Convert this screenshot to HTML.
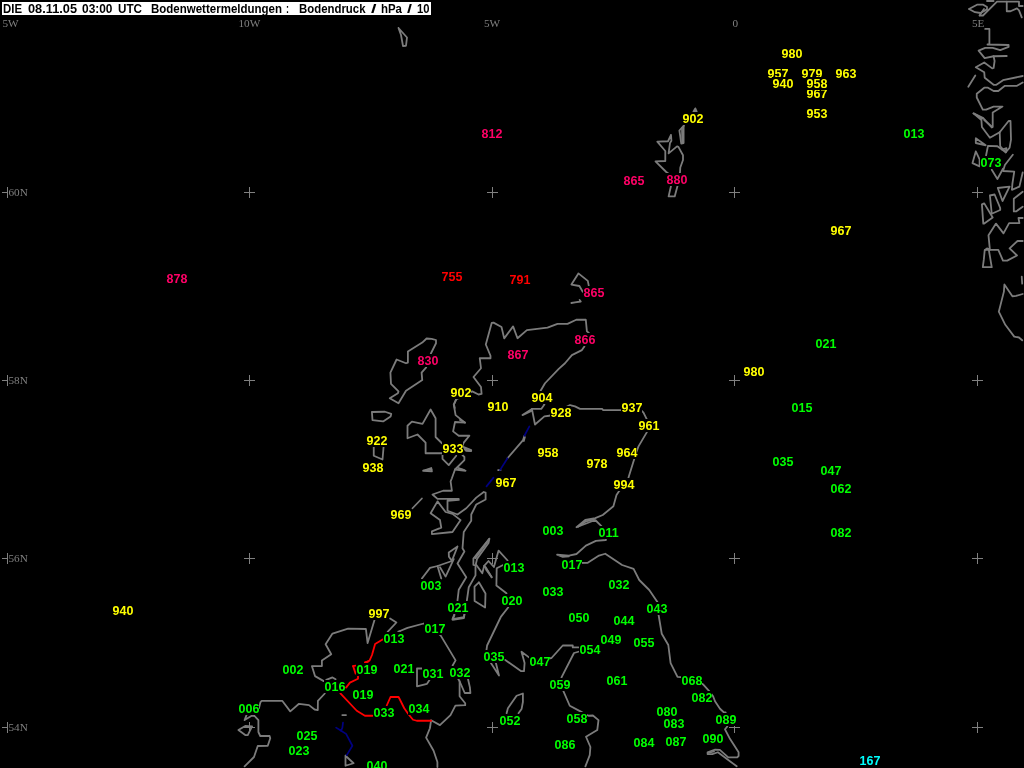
<!DOCTYPE html>
<html lang="de"><head><meta charset="utf-8"><title>Bodenwettermeldungen</title>
<style>
html,body{margin:0;padding:0;background:#000;width:1024px;height:768px;overflow:hidden}
svg{display:block;position:absolute;left:0;top:0;will-change:transform}
.l{font-family:"Liberation Sans",Arial,sans-serif;font-weight:bold;font-size:12.5px}
.t{font-family:"Liberation Sans",Arial,sans-serif;font-weight:bold;font-size:12.5px;fill:#000}
.g{font-family:"Liberation Serif","Times New Roman",serif;font-size:11.2px;fill:#808080}
.c{stroke:#808080;stroke-width:1;fill:none;shape-rendering:crispEdges}
.k{stroke:#7c7c7c;stroke-width:1.8;fill:none;stroke-linejoin:round;stroke-linecap:round}
.r{stroke:#ff0000;stroke-width:1.8;fill:none;stroke-linejoin:round;stroke-linecap:round}
.b{stroke:#000080;stroke-width:1.7;fill:none;stroke-linejoin:round;stroke-linecap:round}
</style></head><body>
<svg width="1024" height="768" viewBox="0 0 1024 768">
<rect x="0" y="0" width="1024" height="768" fill="#000"/>
<path class="c" d="M2 192.5 H13 M7.5 187 V198 M244 192.5 H255 M249.5 187 V198 M487 192.5 H498 M492.5 187 V198 M729 192.5 H740 M734.5 187 V198 M972 192.5 H983 M977.5 187 V198 M2 380.5 H13 M7.5 375 V386 M244 380.5 H255 M249.5 375 V386 M487 380.5 H498 M492.5 375 V386 M729 380.5 H740 M734.5 375 V386 M972 380.5 H983 M977.5 375 V386 M2 558.5 H13 M7.5 553 V564 M244 558.5 H255 M249.5 553 V564 M487 558.5 H498 M492.5 553 V564 M729 558.5 H740 M734.5 553 V564 M972 558.5 H983 M977.5 553 V564 M2 727.5 H13 M7.5 722 V733 M244 727.5 H255 M249.5 722 V733 M487 727.5 H498 M492.5 722 V733 M729 727.5 H740 M734.5 722 V733 M972 727.5 H983 M977.5 722 V733"/>
<g>
<polyline class="k" points="398.5,28 407,37.5 406,45.75 403,46 401,35 398.5,28"/>
<polyline class="k" points="969,9 977,4.7 983.3,4.7 987,7 987,9.4 980.5,13 975,12.2 969,9"/>
<polyline class="k" points="987,1 993.6,1"/>
<polyline class="k" points="980,15.5 983,15.5 997,1.7 1019,1.7 1019,6 1022.7,6"/>
<polyline class="k" points="984,9 979.5,15.5"/>
<polyline class="k" points="1006.75,1.7 1006.75,11.25 1010.5,11.25 1017,8.4 1019,10.3 1021.75,17.3"/>
<polyline class="k" points="985.2,28.9 989.4,28.9 989.4,44.5 987.5,44.5 1008.6,45 1008.6,46.9 1000.2,50.2 992.7,47.8 985.2,47.8 978.6,50.6 984.7,58.1 993.6,56.25 1006.75,56"/>
<polyline class="k" points="993.6,56.25 994.6,61 993.6,68 992.2,68.4 984.25,62.5 975.8,67.3 984.25,72.2 984.7,77.8 993.6,84.8 996.4,84.8 1003,80.2 1022.7,76"/>
<polyline class="k" points="975.3,75.5 968.3,86.7"/>
<polyline class="k" points="1022.7,82.5 1017,85.8 1004.9,85.8 998.3,91 993.6,91 988,87.7 984.25,87.7 976.75,93.75 976.75,97.5 982.8,109.7 986.1,109.7 993.6,106.6 1002.5,106.6 992.7,112.5 992.7,127 991.75,127.5 982.8,117.7 973.5,113.4 981.4,120 981.9,127 989.9,137.8 999.7,132.2 1008.6,121 1010.5,121 1011,139.7 1009.6,147.7 1005.8,152.3 997.4,146.25 988,145.8 986.1,155.2 985,160"/>
<polyline class="k" points="973.5,113.4 982.5,118.6"/>
<polyline class="k" points="999.7,132.2 1000.2,146.25 1005.8,152.3"/>
<polyline class="k" points="1002,149.5 1006.5,148.2 1005.8,152.3"/>
<polyline class="k" points="984.25,120 992.2,127"/>
<polyline class="k" points="975.8,138.3 985.7,145.3 975.8,143 975.8,138.3"/>
<polyline class="k" points="975.8,151.4 979.6,159.4 979.6,166.4 972.5,163.1 975.8,151.4"/>
<polyline class="k" points="1012.8,154.7 1004.9,165 1003,171 1014.25,171.6 1012.4,183.75 1011.9,189.8 1019.4,186.6 1022.7,172.5"/>
<polyline class="k" points="991.75,169.7 997.4,179 1003,168.75"/>
<polyline class="k" points="997.8,188 1009.6,186.6 1002.5,201 997.8,188"/>
<polyline class="k" points="989.9,195.5 994.6,194.5 1000.2,208 1000.2,210 991.75,213.75 989.9,195.5"/>
<polyline class="k" points="981.9,204.4 984.25,203.4 992.7,217.5 984.25,223.6 983.3,223.6 981.9,204.4"/>
<polyline class="k" points="1022.7,191.7 1013.8,198.75 1013.8,211.4 1016.1,211.4 1022.7,206.7"/>
<polyline class="k" points="1022.7,218 1018.5,218 1019.4,223.1 1009.1,223.1 1003.5,233.4 996,223.6 988.5,235.3 989.9,249.8 987,248.4 984.7,250.3 983.8,259.7 982.8,267.2 991.75,267.2 990.8,261.6 988.9,250.3"/>
<polyline class="k" points="985.2,249.8 998.3,249.8 1003,260.6 1007.2,260.6 1017,255.5 1009.6,248.4 1017.5,241 1022.7,241"/>
<polyline class="k" points="1021.75,276.6 1022.2,283.6"/>
<polyline class="k" points="1022.7,294 1016.1,295.8 1012.4,296.25 1004.4,284.5 1003.9,291.6 998.8,311.7 1005.3,324.8 1014.25,336.6 1019,337.5 1022.2,340.3"/>
<polyline class="k" points="693.4,111.7 695.3,108.4 696.7,111.7 693.4,111.7"/>
<polyline class="k" points="684,125.3 679.4,130.5 680.3,136.6 681.25,143.6 683.6,143.1 683.6,127.2 684,125.3"/>
<polyline class="k" points="682,128 682.3,143"/>
<polyline class="k" points="671,135 668,141.25 657.3,141.7 665.3,151 665.3,161 655.5,161.4 666.25,172 669,174 671,186 670,190.3 668.6,196.4 674.7,196.4 677.5,186 680,172.5 680.3,167.5 683,160 683,155.3 678.4,146.9 677,146.4 668.6,153.4 670,143 671.4,140.8 671,135"/>
<polyline class="k" points="588.75,285.6 587.8,280.9 578.4,273.4 571.4,284.6 579.4,286 582.7,291.7"/>
<polyline class="k" points="571.4,303 575,302.4 580.8,301.5 579.6,300"/>
<polyline class="k" points="431,353.25 436,343.25 436,340 431.6,338.9 426.6,338.5 422.25,342.6 407.9,351.4 407.9,362.6 406,363.25 396.6,359.5 390.4,372.6 391,383.9 398.5,391.4 397.9,393.25 389.75,398.25 398.5,403.25 406,390.75 422.25,380.1 421.6,372.6 426,367.6 431,353.25"/>
<polyline class="k" points="371.9,412 385,411.75 391.25,413.9 390.6,416.4 383.1,421.4 372.5,420.1 371.9,412"/>
<polyline class="k" points="373.75,445 373.75,455.75 382.5,459.5 383.75,445"/>
<polyline class="k" points="454.75,408 454,404.5 456,399.5 472.25,391.4 478.5,394.5 481.6,393.9 481,387 473.5,377 481,368.25 479.75,358.25 490.5,358.25 490.5,355.75 485.8,344.5 491.7,323 493.5,322.6 501.5,327 504.2,338.4 513.1,326.4 517.5,338.25 526.9,330.1 547.5,327.6 557.5,323.9 567.5,323.9 576.25,319.75 585.8,319.75 586.9,331.4 588.75,332.8 586,340 584.4,346.4 581.9,350.1 571.9,355.1 565,363.25 558.75,368.9 545,383.25 540.6,390.75 541,398 544.4,404.5 541.25,408.9 531.9,408.9 522.5,415.1 531.9,410.75"/>
<polyline class="k" points="531.9,408.9 535,424.5 544.4,416.4 549.4,415.75 560,410 570,405.1 575,406.4 580,408.9 602.25,408.9 603,410.1 641,410.1 643.5,412.6 646.6,418.9 649,426 646.6,432.6 638.5,446.4 636,453 634.1,459.5 628.5,477.6 624,486 619,491.25 616.5,495 613.4,506.25 602.75,515 595.25,518.1 585.25,520 576.5,527.25 595.25,520 600.9,525.6 606,532 605.9,540 595.9,540.9 585.9,545.6 576.5,554 569,555.6 557.1,554.75 562.75,556.9 569,556.25"/>
<polyline class="k" points="578,526.8 586,521.3 594,519.3"/>
<polyline class="k" points="575,563 587.75,562.75 599,555.6 605.25,553.75 622.1,565 633.6,568.9 639.25,580 649.25,590 657.4,601.9 658,608 658.6,615 661.75,633.75 668.3,645 670.6,663.1 677.5,676.9 680.6,677.1 695,681 703.1,684.4 708.75,690.6 713.1,696.25 715,701.25 720,708.75 723.75,712.25 725.6,712.5 727.5,719 727.3,726.5 725,729.3 730.1,739.1 738.6,752.25 738.6,756 737.2,757.4 728.25,757.4 719.8,749.9 715.1,749.6 707.6,752.25 707.6,754.1 712.3,754.1 717.9,752.25 736.7,766.3"/>
<polyline class="k" points="708,753 714,751.5"/>
<polyline class="k" points="524.4,435.75 523.1,440.1 507.5,458.25"/>
<polyline class="k" points="524.9,437 523.8,441"/>
<polyline class="k" points="498.1,470.1 500.6,470.1"/>
<polyline class="k" points="456.25,399.5 453.75,404.5 455.6,415.1 465,422.6 455,422 453.1,431.4 458.75,435.75 469.4,435.75 463.75,442.6 462,447"/>
<polyline class="k" points="460,420 465,422.6"/>
<polyline class="k" points="463.75,447 471.25,450.1 471,451.2 466,450.8 463.75,447"/>
<polyline class="k" points="465,449.5 470.5,450.8"/>
<polyline class="k" points="462.5,455.1 464.4,457 464.4,460.1 455,469.5 465.6,470.75 457.5,467.5"/>
<polyline class="k" points="459,468.8 464,470"/>
<polyline class="k" points="455,469.5 451.9,478.25 450.6,481.4 451.9,490.75 443.1,490.75 432.5,494.5 437.5,498.9 458.75,498.9 458.75,499.9 447.5,500.75 447.5,510.75 457.5,514.5 466.25,508.25 476.25,497.6 483.75,492 485.6,492.6 485.6,499.5 476.25,504.5 471.25,514.5 471.25,520.75 463.75,532 462.5,548.25 464.4,551.5 457.5,563.5 466.25,577.25 458.75,589.75 457.5,600.4 456,607 454.4,614.1 452.5,619.1 463.75,617.25 464.4,614.1 466,607 466.9,600.4 468.75,587.25 475.5,575.4 475.5,565.5 473.4,564.9 473.4,558.6 489,539"/>
<polyline class="k" points="441.9,443.25 435.6,437 435.6,418.25 430.6,409.5 422.5,423.9 411.9,421.6 407.5,425.75 407.5,438.25 417.5,434.5 425.6,442.6 425.6,453.25 441.9,453.25"/>
<polyline class="k" points="442.5,455.1 442.5,458.9 448.75,465.1 456.25,455.75"/>
<polyline class="k" points="423.1,470.75 431.25,468 431.9,471.4 423.1,470.75"/>
<polyline class="k" points="426,470.3 431.5,469.6"/>
<polyline class="k" points="437.5,501.4 430.6,513.25 440,520.1 441.25,527.6 431.9,531.4 431.9,534.1 452.5,532 460.6,520.1 452.5,513.9 445.6,512 437.5,501.4"/>
<polyline class="k" points="421.9,498.5 412.5,508.25"/>
<polyline class="k" points="457.5,546.5 448.75,552.4 448.9,556.8 451.9,560.9 457.5,546.5"/>
<polyline class="k" points="451.9,561 437.5,566 430,567.9 421.9,578.5"/>
<polyline class="k" points="437.5,566 441.25,578.5"/>
<polyline class="k" points="440,567.25 445.6,576.6 453.75,559.1"/>
<polyline class="k" points="489.4,538.7 488.5,543 477,559.1 475.8,564.2 482.3,573.3 484.2,565.8 488.5,561 493.9,567 498.6,550.6 507.6,560.5"/>
<polyline class="k" points="488.9,539.6 475.3,558.2"/>
<polyline class="k" points="484.2,565.8 491.7,577.3 486,569.5"/>
<polyline class="k" points="485.5,567 491.7,577.3"/>
<polyline class="k" points="503.1,565 496.7,568.2 496.4,585.5 506.4,593.2 508.3,607.3 501.4,616.1 500.9,616.75 487.1,645.5 486.5,649.9"/>
<polyline class="k" points="478.9,582.3 474.5,586.7 474.6,601 485.1,607.6 485.5,593.5 478.9,582.3"/>
<polyline class="k" points="490.9,663 499,675.5 495.9,663"/>
<polyline class="k" points="505.25,659.9 520.9,671.1 524,671.1 524.6,663 521.5,651.75 529,657.4 540,660 551.5,658 562.75,645.5 572.75,645.5 572.75,647.4 578.4,647.4"/>
<polyline class="k" points="578.4,651.75 574,653 561.5,677.4 562,685 563.4,691.1 569.75,705.75 580.4,711.4 585,714 588.5,715.75 592.9,715.5 598.5,720.1 597.25,730.1 586,736.75 590.4,747 589.75,755.1 585.4,766.4"/>
<polyline class="k" points="506.6,713.25 507.9,708.25 516.6,695.75 522.9,693.5 522.9,702 521.6,708.9 518.5,713.25"/>
<polyline class="k" points="400,631 407.5,627.9 423.75,623.5 432,628 440.75,635.6 455.6,660.4 452.6,665.5 456,675 459.6,681.3 459.6,696.3 465.2,703.3 465.2,705.2 455.4,705.7 450.5,715.1 439.9,725.1 431.1,720.3 429.9,728.25 426.1,737.6 433.6,750.75 437.4,762 437.4,767"/>
<polyline class="k" points="459.6,681.3 464.75,693 470.4,693 469.9,687.4 468,679"/>
<polyline class="k" points="454.5,615 452.6,619.75 463.9,618.1 464.5,614.4"/>
<polyline class="k" points="422,668.5 417,668.5 417,686.3 427,683.8 429.5,680"/>
<polyline class="k" points="398.25,631.5 400,631"/>
<polyline class="k" points="390.1,618.5 396.4,622.5 387.6,631.9"/>
<polyline class="k" points="374.5,620 367.6,643.1 365.9,629 348.1,628.6 332.5,633.6 325.6,644.25 331.25,654.25 321.9,660.5 321.9,666.1 311.9,666.1 315,676.1 323.75,681.1"/>
<polyline class="k" points="326.25,679.9 332.5,677.4 335.6,679.25"/>
<polyline class="k" points="324.8,693.5 317.9,700.9 317.8,710.1 314.6,709.5 309,705.1 299,703.8 290.25,711.4 282.2,700.8 261.7,700.8 260.4,702.4 259,708"/>
<polyline class="k" points="246.5,715.1 244.6,720.1 252.1,715.5 254.6,716 258.4,720.1 258.4,732 260.25,736 269.6,736 270.25,738.25 267.75,745.75 257.75,746 254,757 244.6,766.4"/>
<polyline class="k" points="238.4,730.1 245.25,726 252.1,726.4 247.75,735.1 245.25,735.1 238.4,730.1"/>
<polyline class="k" points="342.3,715.1 346,715.1"/>
<polyline class="k" points="345.5,755.75 345.5,765.75 353.6,763.25 345.5,755.75"/>
</g><g>
<polyline class="b" points="529.4,426.4 524.4,435.75"/>
<polyline class="b" points="507.5,458.25 500,470.1"/>
<polyline class="b" points="493.5,477.6 486.5,486.4"/>
<polyline class="b" points="343,722.6 342.4,727.6 341.1,730.75 336.1,727.6"/>
<polyline class="b" points="341.1,730.75 346.1,733.9 352.4,745.75 346.75,755.1"/>
</g><g>
<polyline class="r" points="382.6,639.4 375.1,644 372,655 369.5,660.6 365.1,662.5"/>
<polyline class="r" points="365,662.4 368,661.75"/>
<polyline class="r" points="353.1,666.1 355.6,673.6"/>
<polyline class="r" points="353.1,666.1 355.5,665.6"/>
<polyline class="r" points="346.1,687.6 349.9,682.6 358,678.8 358,676.3"/>
<polyline class="r" points="340.4,693.4 356.75,710.75 364.9,715.75 372.4,715.75"/>
<polyline class="r" points="386.75,705.5 390.5,697 398.6,697 404.25,708.25 408.3,714 413,719.75 416.75,720.75 431.1,720.75"/>
</g>
<text class="g" x="2.5" y="27">5W</text>
<text class="g" x="238.5" y="27">10W</text>
<text class="g" x="484" y="27">5W</text>
<text class="g" x="732.5" y="27">0</text>
<text class="g" x="972" y="27">5E</text>
<rect x="8" y="186" width="21" height="12" fill="#000"/><text class="g" x="8.5" y="196.4">60N</text>
<rect x="8" y="374" width="21" height="12" fill="#000"/><text class="g" x="8.5" y="384.4">58N</text>
<rect x="8" y="552" width="21" height="12" fill="#000"/><text class="g" x="8.5" y="562.4">56N</text>
<rect x="8" y="721" width="21" height="12" fill="#000"/><text class="g" x="8.5" y="731.4">54N</text>
<rect x="2" y="2" width="429" height="13" fill="#fff"/>
<text class="t" x="3" y="13" textLength="19" lengthAdjust="spacingAndGlyphs">DIE</text>
<text class="t" x="28" y="13" textLength="49" lengthAdjust="spacingAndGlyphs">08.11.05</text>
<text class="t" x="82" y="13" textLength="30.5" lengthAdjust="spacingAndGlyphs">03:00</text>
<text class="t" x="118" y="13" textLength="24" lengthAdjust="spacingAndGlyphs">UTC</text>
<text class="t" x="151" y="13" textLength="131" lengthAdjust="spacingAndGlyphs">Bodenwettermeldungen</text>
<text class="t" x="286" y="13" textLength="3" lengthAdjust="spacingAndGlyphs">:</text>
<text class="t" x="299" y="13" textLength="66.5" lengthAdjust="spacingAndGlyphs">Bodendruck</text>
<text class="t" x="371" y="13" textLength="5.5" lengthAdjust="spacingAndGlyphs">/</text>
<text class="t" x="381" y="13" textLength="21" lengthAdjust="spacingAndGlyphs">hPa</text>
<text class="t" x="407" y="13" textLength="5" lengthAdjust="spacingAndGlyphs">/</text>
<text class="t" x="417" y="13" textLength="12.5" lengthAdjust="spacingAndGlyphs">10</text>
<rect x="481" y="127" width="21" height="13" fill="#000"/><text class="l" x="481.6" y="138" fill="#ff0066">812</text>
<rect x="682" y="112" width="21" height="13" fill="#000"/><text class="l" x="682.6" y="123" fill="#ffff00">902</text>
<rect x="623" y="174" width="21" height="13" fill="#000"/><text class="l" x="623.6" y="185" fill="#ff0066">865</text>
<rect x="666" y="173" width="21" height="13" fill="#000"/><text class="l" x="666.6" y="184" fill="#ff0066">880</text>
<rect x="781" y="47" width="21" height="13" fill="#000"/><text class="l" x="781.6" y="58" fill="#ffff00">980</text>
<rect x="767" y="67" width="21" height="13" fill="#000"/><text class="l" x="767.6" y="78" fill="#ffff00">957</text>
<rect x="801" y="67" width="21" height="13" fill="#000"/><text class="l" x="801.6" y="78" fill="#ffff00">979</text>
<rect x="835" y="67" width="21" height="13" fill="#000"/><text class="l" x="835.6" y="78" fill="#ffff00">963</text>
<rect x="772" y="77" width="21" height="13" fill="#000"/><text class="l" x="772.6" y="88" fill="#ffff00">940</text>
<rect x="806" y="87" width="21" height="13" fill="#000"/><text class="l" x="806.6" y="98" fill="#ffff00">967</text>
<rect x="806" y="77" width="21" height="13" fill="#000"/><text class="l" x="806.6" y="88" fill="#ffff00">958</text>
<rect x="806" y="107" width="21" height="13" fill="#000"/><text class="l" x="806.6" y="118" fill="#ffff00">953</text>
<rect x="903" y="127" width="21" height="13" fill="#000"/><text class="l" x="903.6" y="138" fill="#00ff00">013</text>
<rect x="980" y="156" width="21" height="13" fill="#000"/><text class="l" x="980.6" y="167" fill="#00ff00">073</text>
<rect x="166" y="272" width="21" height="13" fill="#000"/><text class="l" x="166.6" y="283" fill="#ff0066">878</text>
<rect x="441" y="270" width="21" height="13" fill="#000"/><text class="l" x="441.6" y="281" fill="#ff0000">755</text>
<rect x="417" y="354" width="21" height="13" fill="#000"/><text class="l" x="417.6" y="365" fill="#ff0066">830</text>
<rect x="509" y="273" width="21" height="13" fill="#000"/><text class="l" x="509.6" y="284" fill="#ff0000">791</text>
<rect x="583" y="286" width="21" height="13" fill="#000"/><text class="l" x="583.6" y="297" fill="#ff0066">865</text>
<rect x="574" y="333" width="21" height="13" fill="#000"/><text class="l" x="574.6" y="344" fill="#ff0066">866</text>
<rect x="507" y="348" width="21" height="13" fill="#000"/><text class="l" x="507.6" y="359" fill="#ff0066">867</text>
<rect x="743" y="365" width="21" height="13" fill="#000"/><text class="l" x="743.6" y="376" fill="#ffff00">980</text>
<rect x="830" y="224" width="21" height="13" fill="#000"/><text class="l" x="830.6" y="235" fill="#ffff00">967</text>
<rect x="815" y="337" width="21" height="13" fill="#000"/><text class="l" x="815.6" y="348" fill="#00ff00">021</text>
<rect x="450" y="386" width="21" height="13" fill="#000"/><text class="l" x="450.6" y="397" fill="#ffff00">902</text>
<rect x="487" y="400" width="21" height="13" fill="#000"/><text class="l" x="487.6" y="411" fill="#ffff00">910</text>
<rect x="366" y="434" width="21" height="13" fill="#000"/><text class="l" x="366.6" y="445" fill="#ffff00">922</text>
<rect x="362" y="461" width="21" height="13" fill="#000"/><text class="l" x="362.6" y="472" fill="#ffff00">938</text>
<rect x="442" y="442" width="21" height="13" fill="#000"/><text class="l" x="442.6" y="453" fill="#ffff00">933</text>
<rect x="390" y="508" width="21" height="13" fill="#000"/><text class="l" x="390.6" y="519" fill="#ffff00">969</text>
<rect x="495" y="476" width="21" height="13" fill="#000"/><text class="l" x="495.6" y="487" fill="#ffff00">967</text>
<rect x="531" y="391" width="21" height="13" fill="#000"/><text class="l" x="531.6" y="402" fill="#ffff00">904</text>
<rect x="550" y="406" width="21" height="13" fill="#000"/><text class="l" x="550.6" y="417" fill="#ffff00">928</text>
<rect x="621" y="401" width="21" height="13" fill="#000"/><text class="l" x="621.6" y="412" fill="#ffff00">937</text>
<rect x="638" y="419" width="21" height="13" fill="#000"/><text class="l" x="638.6" y="430" fill="#ffff00">961</text>
<rect x="537" y="446" width="21" height="13" fill="#000"/><text class="l" x="537.6" y="457" fill="#ffff00">958</text>
<rect x="616" y="446" width="21" height="13" fill="#000"/><text class="l" x="616.6" y="457" fill="#ffff00">964</text>
<rect x="586" y="457" width="21" height="13" fill="#000"/><text class="l" x="586.6" y="468" fill="#ffff00">978</text>
<rect x="613" y="478" width="21" height="13" fill="#000"/><text class="l" x="613.6" y="489" fill="#ffff00">994</text>
<rect x="542" y="524" width="21" height="13" fill="#000"/><text class="l" x="542.6" y="535" fill="#00ff00">003</text>
<rect x="598" y="526" width="21" height="13" fill="#000"/><text class="l" x="598.6" y="537" fill="#00ff00">011</text>
<rect x="561" y="558" width="21" height="13" fill="#000"/><text class="l" x="561.6" y="569" fill="#00ff00">017</text>
<rect x="503" y="561" width="21" height="13" fill="#000"/><text class="l" x="503.6" y="572" fill="#00ff00">013</text>
<rect x="791" y="401" width="21" height="13" fill="#000"/><text class="l" x="791.6" y="412" fill="#00ff00">015</text>
<rect x="772" y="455" width="21" height="13" fill="#000"/><text class="l" x="772.6" y="466" fill="#00ff00">035</text>
<rect x="820" y="464" width="21" height="13" fill="#000"/><text class="l" x="820.6" y="475" fill="#00ff00">047</text>
<rect x="830" y="482" width="21" height="13" fill="#000"/><text class="l" x="830.6" y="493" fill="#00ff00">062</text>
<rect x="830" y="526" width="21" height="13" fill="#000"/><text class="l" x="830.6" y="537" fill="#00ff00">082</text>
<rect x="112" y="604" width="21" height="13" fill="#000"/><text class="l" x="112.6" y="615" fill="#ffff00">940</text>
<rect x="238" y="702" width="21" height="13" fill="#000"/><text class="l" x="238.6" y="713" fill="#00ff00">006</text>
<rect x="420" y="579" width="21" height="13" fill="#000"/><text class="l" x="420.6" y="590" fill="#00ff00">003</text>
<rect x="447" y="601" width="21" height="13" fill="#000"/><text class="l" x="447.6" y="612" fill="#00ff00">021</text>
<rect x="368" y="607" width="21" height="13" fill="#000"/><text class="l" x="368.6" y="618" fill="#ffff00">997</text>
<rect x="424" y="622" width="21" height="13" fill="#000"/><text class="l" x="424.6" y="633" fill="#00ff00">017</text>
<rect x="383" y="632" width="21" height="13" fill="#000"/><text class="l" x="383.6" y="643" fill="#00ff00">013</text>
<rect x="282" y="663" width="21" height="13" fill="#000"/><text class="l" x="282.6" y="674" fill="#00ff00">002</text>
<rect x="356" y="663" width="21" height="13" fill="#000"/><text class="l" x="356.6" y="674" fill="#00ff00">019</text>
<rect x="393" y="662" width="21" height="13" fill="#000"/><text class="l" x="393.6" y="673" fill="#00ff00">021</text>
<rect x="422" y="667" width="21" height="13" fill="#000"/><text class="l" x="422.6" y="678" fill="#00ff00">031</text>
<rect x="449" y="666" width="21" height="13" fill="#000"/><text class="l" x="449.6" y="677" fill="#00ff00">032</text>
<rect x="483" y="650" width="21" height="13" fill="#000"/><text class="l" x="483.6" y="661" fill="#00ff00">035</text>
<rect x="324" y="680" width="21" height="13" fill="#000"/><text class="l" x="324.6" y="691" fill="#00ff00">016</text>
<rect x="352" y="688" width="21" height="13" fill="#000"/><text class="l" x="352.6" y="699" fill="#00ff00">019</text>
<rect x="373" y="706" width="21" height="13" fill="#000"/><text class="l" x="373.6" y="717" fill="#00ff00">033</text>
<rect x="408" y="702" width="21" height="13" fill="#000"/><text class="l" x="408.6" y="713" fill="#00ff00">034</text>
<rect x="296" y="729" width="21" height="13" fill="#000"/><text class="l" x="296.6" y="740" fill="#00ff00">025</text>
<rect x="288" y="744" width="21" height="13" fill="#000"/><text class="l" x="288.6" y="755" fill="#00ff00">023</text>
<rect x="366" y="759" width="21" height="13" fill="#000"/><text class="l" x="366.6" y="770" fill="#00ff00">040</text>
<rect x="501" y="594" width="21" height="13" fill="#000"/><text class="l" x="501.6" y="605" fill="#00ff00">020</text>
<rect x="499" y="714" width="21" height="13" fill="#000"/><text class="l" x="499.6" y="725" fill="#00ff00">052</text>
<rect x="542" y="585" width="21" height="13" fill="#000"/><text class="l" x="542.6" y="596" fill="#00ff00">033</text>
<rect x="608" y="578" width="21" height="13" fill="#000"/><text class="l" x="608.6" y="589" fill="#00ff00">032</text>
<rect x="646" y="602" width="21" height="13" fill="#000"/><text class="l" x="646.6" y="613" fill="#00ff00">043</text>
<rect x="568" y="611" width="21" height="13" fill="#000"/><text class="l" x="568.6" y="622" fill="#00ff00">050</text>
<rect x="613" y="614" width="21" height="13" fill="#000"/><text class="l" x="613.6" y="625" fill="#00ff00">044</text>
<rect x="600" y="633" width="21" height="13" fill="#000"/><text class="l" x="600.6" y="644" fill="#00ff00">049</text>
<rect x="633" y="636" width="21" height="13" fill="#000"/><text class="l" x="633.6" y="647" fill="#00ff00">055</text>
<rect x="579" y="643" width="21" height="13" fill="#000"/><text class="l" x="579.6" y="654" fill="#00ff00">054</text>
<rect x="529" y="655" width="21" height="13" fill="#000"/><text class="l" x="529.6" y="666" fill="#00ff00">047</text>
<rect x="549" y="678" width="21" height="13" fill="#000"/><text class="l" x="549.6" y="689" fill="#00ff00">059</text>
<rect x="606" y="674" width="21" height="13" fill="#000"/><text class="l" x="606.6" y="685" fill="#00ff00">061</text>
<rect x="681" y="674" width="21" height="13" fill="#000"/><text class="l" x="681.6" y="685" fill="#00ff00">068</text>
<rect x="691" y="691" width="21" height="13" fill="#000"/><text class="l" x="691.6" y="702" fill="#00ff00">082</text>
<rect x="656" y="705" width="21" height="13" fill="#000"/><text class="l" x="656.6" y="716" fill="#00ff00">080</text>
<rect x="663" y="717" width="21" height="13" fill="#000"/><text class="l" x="663.6" y="728" fill="#00ff00">083</text>
<rect x="715" y="713" width="21" height="13" fill="#000"/><text class="l" x="715.6" y="724" fill="#00ff00">089</text>
<rect x="566" y="712" width="21" height="13" fill="#000"/><text class="l" x="566.6" y="723" fill="#00ff00">058</text>
<rect x="554" y="738" width="21" height="13" fill="#000"/><text class="l" x="554.6" y="749" fill="#00ff00">086</text>
<rect x="633" y="736" width="21" height="13" fill="#000"/><text class="l" x="633.6" y="747" fill="#00ff00">084</text>
<rect x="665" y="735" width="21" height="13" fill="#000"/><text class="l" x="665.6" y="746" fill="#00ff00">087</text>
<rect x="702" y="732" width="21" height="13" fill="#000"/><text class="l" x="702.6" y="743" fill="#00ff00">090</text>
<rect x="859" y="754" width="21" height="13" fill="#000"/><text class="l" x="859.6" y="765" fill="#00ffff">167</text>
</svg></body></html>
